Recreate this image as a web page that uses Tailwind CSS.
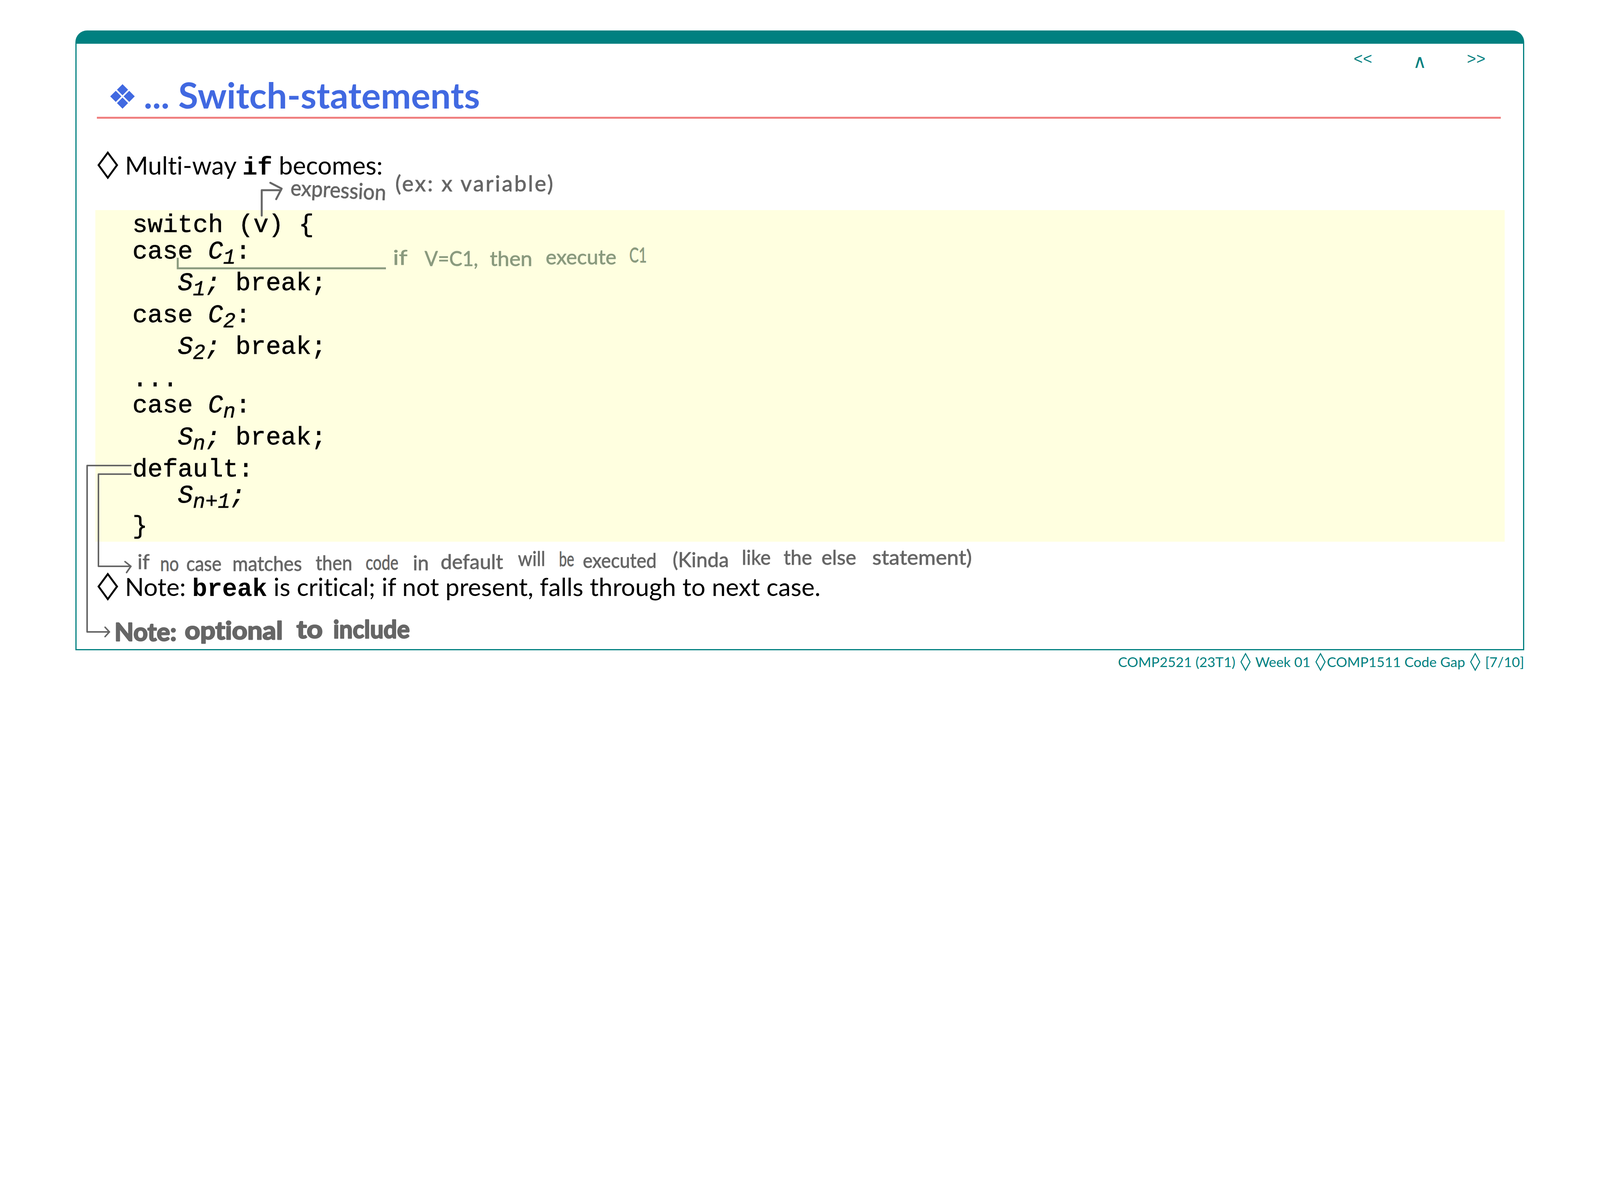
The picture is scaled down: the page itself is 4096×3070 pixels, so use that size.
<!doctype html>
<html><head><meta charset="utf-8"><script src="https://cdn.jsdelivr.net/npm/@tailwindcss/browser@4"></script></head>
<body class="bg-white">
<div class="relative w-[4096px] h-[3070px] overflow-hidden bg-white pt-[78px] pl-[193px] font-['Lato','Liberation_Sans',sans-serif] text-black [font-variant-ligatures:none]">
  <div class="w-[3709px]">
    <div class="h-[34px] bg-[#008080] rounded-t-[30px]"></div>
    <div class="h-[1553px] border-x-[3px] border-b-[3px] border-[#008080]">
      <div class="flex h-[54px] pt-[22px] text-[#008080] font-['Liberation_Mono',monospace] text-[40px] leading-[40px]">
        <span class="ml-[3269px] w-[146px]">&lt;&lt;</span>
        <span class="w-[144px] font-['DejaVu_Sans',sans-serif] font-extralight text-[48px] relative top-[3px] left-[6px]">∧</span>
        <span>&gt;&gt;</span>
      </div>
      <div class="ml-[52px] w-[3594px] h-[138px] border-b-[5px] border-[#f08080] flex items-baseline pl-[27px] pt-[27px] text-[#4169e1] text-[92.7px] leading-[100px] font-bold">
        <span class="font-['DejaVu_Sans',sans-serif] text-[86px] w-[93px] font-normal">❖</span><span>... Switch-statements</span>
      </div>
      <div class="h-[234px] ml-[56px] pt-[69px] flex items-baseline text-[64px] leading-[90px]">
        <span class="w-[68px] font-['DejaVu_Sans',sans-serif] text-[84px] origin-left scale-x-[1.3] scale-y-[0.83] relative top-[1px] -left-[3px]">◊</span><span>Multi-way <code class="font-['Liberation_Mono',monospace] font-bold text-[64px]">if</code> becomes:</span>
      </div>
      <div class="ml-[48px] w-[3608px] h-[849px] bg-[#ffffe0] pl-[95px] pt-[6px] font-['Liberation_Mono',monospace] text-[64.5px] leading-[66px] [-webkit-text-stroke:0.8px_black]">
        <div class="h-[68px] whitespace-pre">switch (v) {</div>
        <div class="h-[81px] whitespace-pre">case <i>C<sub class="text-[53px]">1</sub></i>:</div>
        <div class="h-[82px] whitespace-pre">   <i>S<sub class="text-[53px]">1</sub>;</i> break;</div>
        <div class="h-[81px] whitespace-pre">case <i>C<sub class="text-[53px]">2</sub></i>:</div>
        <div class="h-[83px] whitespace-pre">   <i>S<sub class="text-[53px]">2</sub>;</i> break;</div>
        <div class="h-[67px] whitespace-pre">...</div>
        <div class="h-[82px] whitespace-pre">case <i>C<sub class="text-[53px]">n</sub></i>:</div>
        <div class="h-[82px] whitespace-pre">   <i>S<sub class="text-[53px]">n</sub>;</i> break;</div>
        <div class="h-[67px] whitespace-pre">default:</div>
        <div class="h-[79px] whitespace-pre">   <i>S<sub class="text-[53px]">n+1</sub>;</i></div>
        <div class="whitespace-pre">}</div>
      </div>
      <div class="ml-[56px] pt-[65px] flex items-baseline text-[63.8px] leading-[90px]">
        <span class="w-[68px] font-['DejaVu_Sans',sans-serif] text-[84px] origin-left scale-x-[1.3] scale-y-[0.83] relative top-[1px] -left-[3px]">◊</span><span>Note: <code class="font-['Liberation_Mono',monospace] font-bold text-[64px]">break</code> is critical; if not present, falls through to next case.</span>
      </div>
    </div>
    <div class="text-right text-[#008080] text-[35.7px] leading-[50px] mt-[5px] whitespace-pre">COMP2521 (23T1) <span class="inline-block w-[33px] text-center font-['DejaVu_Sans',sans-serif] text-[46px] leading-[0] scale-x-[1.17]">◊</span> Week 01 <span class="inline-block w-[33px] text-center font-['DejaVu_Sans',sans-serif] text-[46px] leading-[0] scale-x-[1.17]">◊</span>COMP1511 Code Gap <span class="inline-block w-[33px] text-center font-['DejaVu_Sans',sans-serif] text-[46px] leading-[0] scale-x-[1.17]">◊</span> [7/10]</div>
  </div>

  <svg class="absolute left-0 top-0 pointer-events-none font-['Lato',sans-serif]" width="4096" height="3070" viewBox="0 0 4096 3070" fill="none">
    <g class="stroke-[#666] stroke-[5px]" stroke-linecap="round" stroke-linejoin="round">
      <path d="M670 552V487H719"/>
      <path d="M692 468L721 483L707 510"/>
    </g>
    <g class="stroke-[#666] stroke-[4px]" stroke-linecap="round" stroke-linejoin="round">
      <path d="M335 1192H223V1618H280"/>
      <path d="M269 1606L280 1618L269 1630"/>
      <path d="M335 1214H252V1450H335"/>
      <path d="M320 1438L335 1450L324 1466"/>
    </g>
    <path class="stroke-[#8a9a7e] stroke-[5px]" d="M455 660V687H988"/>

    <g class="fill-[#666] stroke-[#666] stroke-[1px] text-[56px]" stroke-linejoin="round">
      <text x="743" y="500" textLength="245" lengthAdjust="spacingAndGlyphs" transform="rotate(3 743 500)">expression</text>
      <text x="1012" y="490" textLength="404" lengthAdjust="spacing">(ex: x variable)</text>
    </g>
    <g class="fill-[#8a9a7e] stroke-[#8a9a7e] stroke-[1px] text-[52px]" stroke-linejoin="round">
      <text x="1006" y="678" textLength="37" lengthAdjust="spacingAndGlyphs">if</text>
      <text x="1087" y="681" textLength="137" lengthAdjust="spacingAndGlyphs">V=C1,</text>
      <text x="1254" y="681" textLength="109" lengthAdjust="spacingAndGlyphs">then</text>
      <text x="1397" y="677" textLength="181" lengthAdjust="spacingAndGlyphs">execute</text>
      <text x="1611" y="672" textLength="45" lengthAdjust="spacingAndGlyphs">C1</text>
    </g>
    <g class="fill-[#666] stroke-[#666] stroke-[1px] text-[52px]" stroke-linejoin="round">
      <text x="352" y="1457" textLength="31" lengthAdjust="spacingAndGlyphs">if</text>
      <text x="410" y="1462" textLength="48" lengthAdjust="spacingAndGlyphs">no</text>
      <text x="477" y="1462" textLength="90" lengthAdjust="spacingAndGlyphs">case</text>
      <text x="595" y="1462" textLength="178" lengthAdjust="spacingAndGlyphs">matches</text>
      <text x="808" y="1460" textLength="94" lengthAdjust="spacingAndGlyphs">then</text>
      <text x="936" y="1459" textLength="84" lengthAdjust="spacingAndGlyphs">code</text>
      <text x="1057" y="1460" textLength="41" lengthAdjust="spacingAndGlyphs">in</text>
      <text x="1128" y="1457" textLength="160" lengthAdjust="spacingAndGlyphs">default</text>
      <text x="1326" y="1449" textLength="70" lengthAdjust="spacingAndGlyphs">will</text>
      <text x="1431" y="1450" textLength="39" lengthAdjust="spacingAndGlyphs">be</text>
      <text x="1492" y="1454" textLength="189" lengthAdjust="spacingAndGlyphs">executed</text>
      <text x="1722" y="1452" textLength="144" lengthAdjust="spacingAndGlyphs">(Kinda</text>
      <text x="1899" y="1446" textLength="74" lengthAdjust="spacingAndGlyphs">like</text>
      <text x="2006" y="1446" textLength="73" lengthAdjust="spacingAndGlyphs">the</text>
      <text x="2103" y="1446" textLength="89" lengthAdjust="spacingAndGlyphs">else</text>
      <text x="2233" y="1446" textLength="255" lengthAdjust="spacingAndGlyphs">statement)</text>
    </g>
    <g class="fill-[#666] stroke-[#666] stroke-[3px] text-[64px] font-bold" stroke-linejoin="round">
      <text x="293" y="1641" textLength="159" lengthAdjust="spacingAndGlyphs">Note:</text>
      <text x="473" y="1637" textLength="251" lengthAdjust="spacingAndGlyphs">optional</text>
      <text x="759" y="1634" textLength="67" lengthAdjust="spacingAndGlyphs">to</text>
      <text x="853" y="1634" textLength="196" lengthAdjust="spacingAndGlyphs">include</text>
    </g>
  </svg>
</div>
</body></html>
